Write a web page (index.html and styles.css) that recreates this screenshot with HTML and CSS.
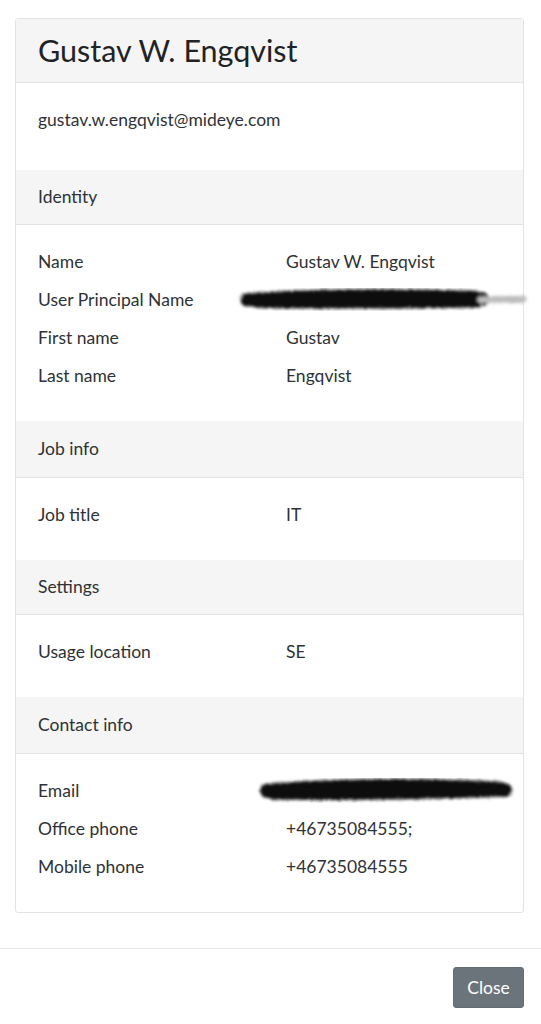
FILE: index.html
```html
<!DOCTYPE html>
<html lang="en">
<head>
<meta charset="utf-8">
<title>Gustav W. Engqvist</title>
<link rel="stylesheet" href="styles.css">
</head>
<body>
<svg class="defs" width="0" height="0" aria-hidden="true">
  <defs>
    <filter id="marker" x="-10%" y="-80%" width="120%" height="260%">
      <feTurbulence type="fractalNoise" baseFrequency="0.9" numOctaves="2" result="noise"/>
      <feDisplacementMap in="SourceGraphic" in2="noise" scale="5" result="disp"/>
      <feGaussianBlur in="disp" stdDeviation="1.4"/>
    </filter>
  </defs>
</svg>
<div class="modal">
  <div class="modal-body">
    <div class="card">
      <div class="card-title"><h1>Gustav W. Engqvist</h1></div>
      <div class="section-body email-body">gustav.w.engqvist@mideye.com</div>

      <div class="section-head">Identity</div>
      <div class="section-body">
        <div class="row"><span class="label">Name</span><span class="value">Gustav W. Engqvist</span></div>
        <div class="row"><span class="label">User Principal Name</span><span class="value">
          <svg class="scribble upn" width="292" height="30" viewBox="0 0 292 30">
            <g filter="url(#marker)" stroke-linecap="round" fill="none">
              <path d="M10 15 C60 11 120 10 180 11 S236 12 246 14" stroke="#111" stroke-width="13"/>
              <path d="M18 18 C80 20 150 19 240 18" stroke="#111" stroke-width="9"/>
              <path d="M244 15 C262 14 276 15 286 14" stroke="#bdbdbd" stroke-width="7"/>
            </g>
          </svg></span></div>
        <div class="row"><span class="label">First name</span><span class="value">Gustav</span></div>
        <div class="row"><span class="label">Last name</span><span class="value">Engqvist</span></div>
      </div>

      <div class="section-head tall">Job info</div>
      <div class="section-body">
        <div class="row"><span class="label">Job title</span><span class="value">IT</span></div>
      </div>

      <div class="section-head">Settings</div>
      <div class="section-body">
        <div class="row"><span class="label">Usage location</span><span class="value">SE</span></div>
      </div>

      <div class="section-head tall">Contact info</div>
      <div class="section-body">
        <div class="row"><span class="label">Email</span><span class="value">
          <svg class="scribble mail" width="262" height="30" viewBox="0 0 262 30">
            <g filter="url(#marker)" stroke-linecap="round" fill="none">
              <path d="M12 15 C70 10 140 9 200 11 S245 13 250 14" stroke="#0d0d0d" stroke-width="14"/>
              <path d="M18 19 C90 20 170 19 246 16" stroke="#0d0d0d" stroke-width="9"/>
            </g>
          </svg></span></div>
        <div class="row"><span class="label">Office phone</span><span class="value">+46735084555;</span></div>
        <div class="row"><span class="label">Mobile phone</span><span class="value">+46735084555</span></div>
      </div>
    </div>
  </div>
  <div class="modal-footer">
    <button class="btn-close" type="button">Close</button>
  </div>
</div>
</body>
</html>
```
FILE: styles.css
```css
html, body {
  margin: 0;
  padding: 0;
  background: #ffffff;
}
body {
  font-family: Lato, "Open Sans", "Liberation Sans", sans-serif;
  font-size: 17.5px;
  color: #2e3236;
  width: 541px;
  height: 1024px;
  overflow: hidden;
}
.defs {
  position: absolute;
  width: 0;
  height: 0;
}
.modal-body {
  padding: 18px 17px 0 15px;
}
.card {
  border: 1px solid #e3e3e3;
  border-radius: 3px;
  background: #fff;
}
.card-title {
  background: #f5f5f5;
  border-bottom: 1px solid #e3e3e3;
  height: 63px;
  display: flex;
  align-items: center;
  padding: 0 22px;
}
.card-title h1 {
  margin: 0;
  font-size: 30.5px;
  font-weight: 400;
  color: #1f2326;
  line-height: 1;
  padding-bottom: 1px;
}
.section-head {
  background: #f5f5f5;
  border-bottom: 1px solid #e3e3e3;
  height: 54px;
  display: flex;
  align-items: center;
  padding: 0 22px;
  line-height: 1;
}
.section-head.tall {
  height: 56px;
}
.section-body {
  padding: 17px 22px 27px;
}
.email-body {
  height: 38px;
  padding-bottom: 32px;
  display: flex;
  align-items: center;
}
.row {
  display: grid;
  grid-template-columns: 248px 1fr;
  height: 38px;
  align-items: center;
}
.value {
  position: relative;
  white-space: nowrap;
}
.scribble {
  display: block;
}
.upn {
  margin-left: -49px;
  margin-top: 1px;
}
.mail {
  margin-left: -31px;
  margin-top: 2px;
}
.modal-footer {
  margin-top: 35px;
  border-top: 1px solid #e8e8e8;
  padding: 18px 17px 0 0;
  display: flex;
  justify-content: flex-end;
}
.btn-close {
  font-family: Lato, "Open Sans", "Liberation Sans", sans-serif;
  font-size: 17.5px;
  color: #fff;
  background: #6b747b;
  border: 1px solid #646d74;
  border-radius: 3px;
  width: 71px;
  height: 41px;
  padding: 0;
}
```
